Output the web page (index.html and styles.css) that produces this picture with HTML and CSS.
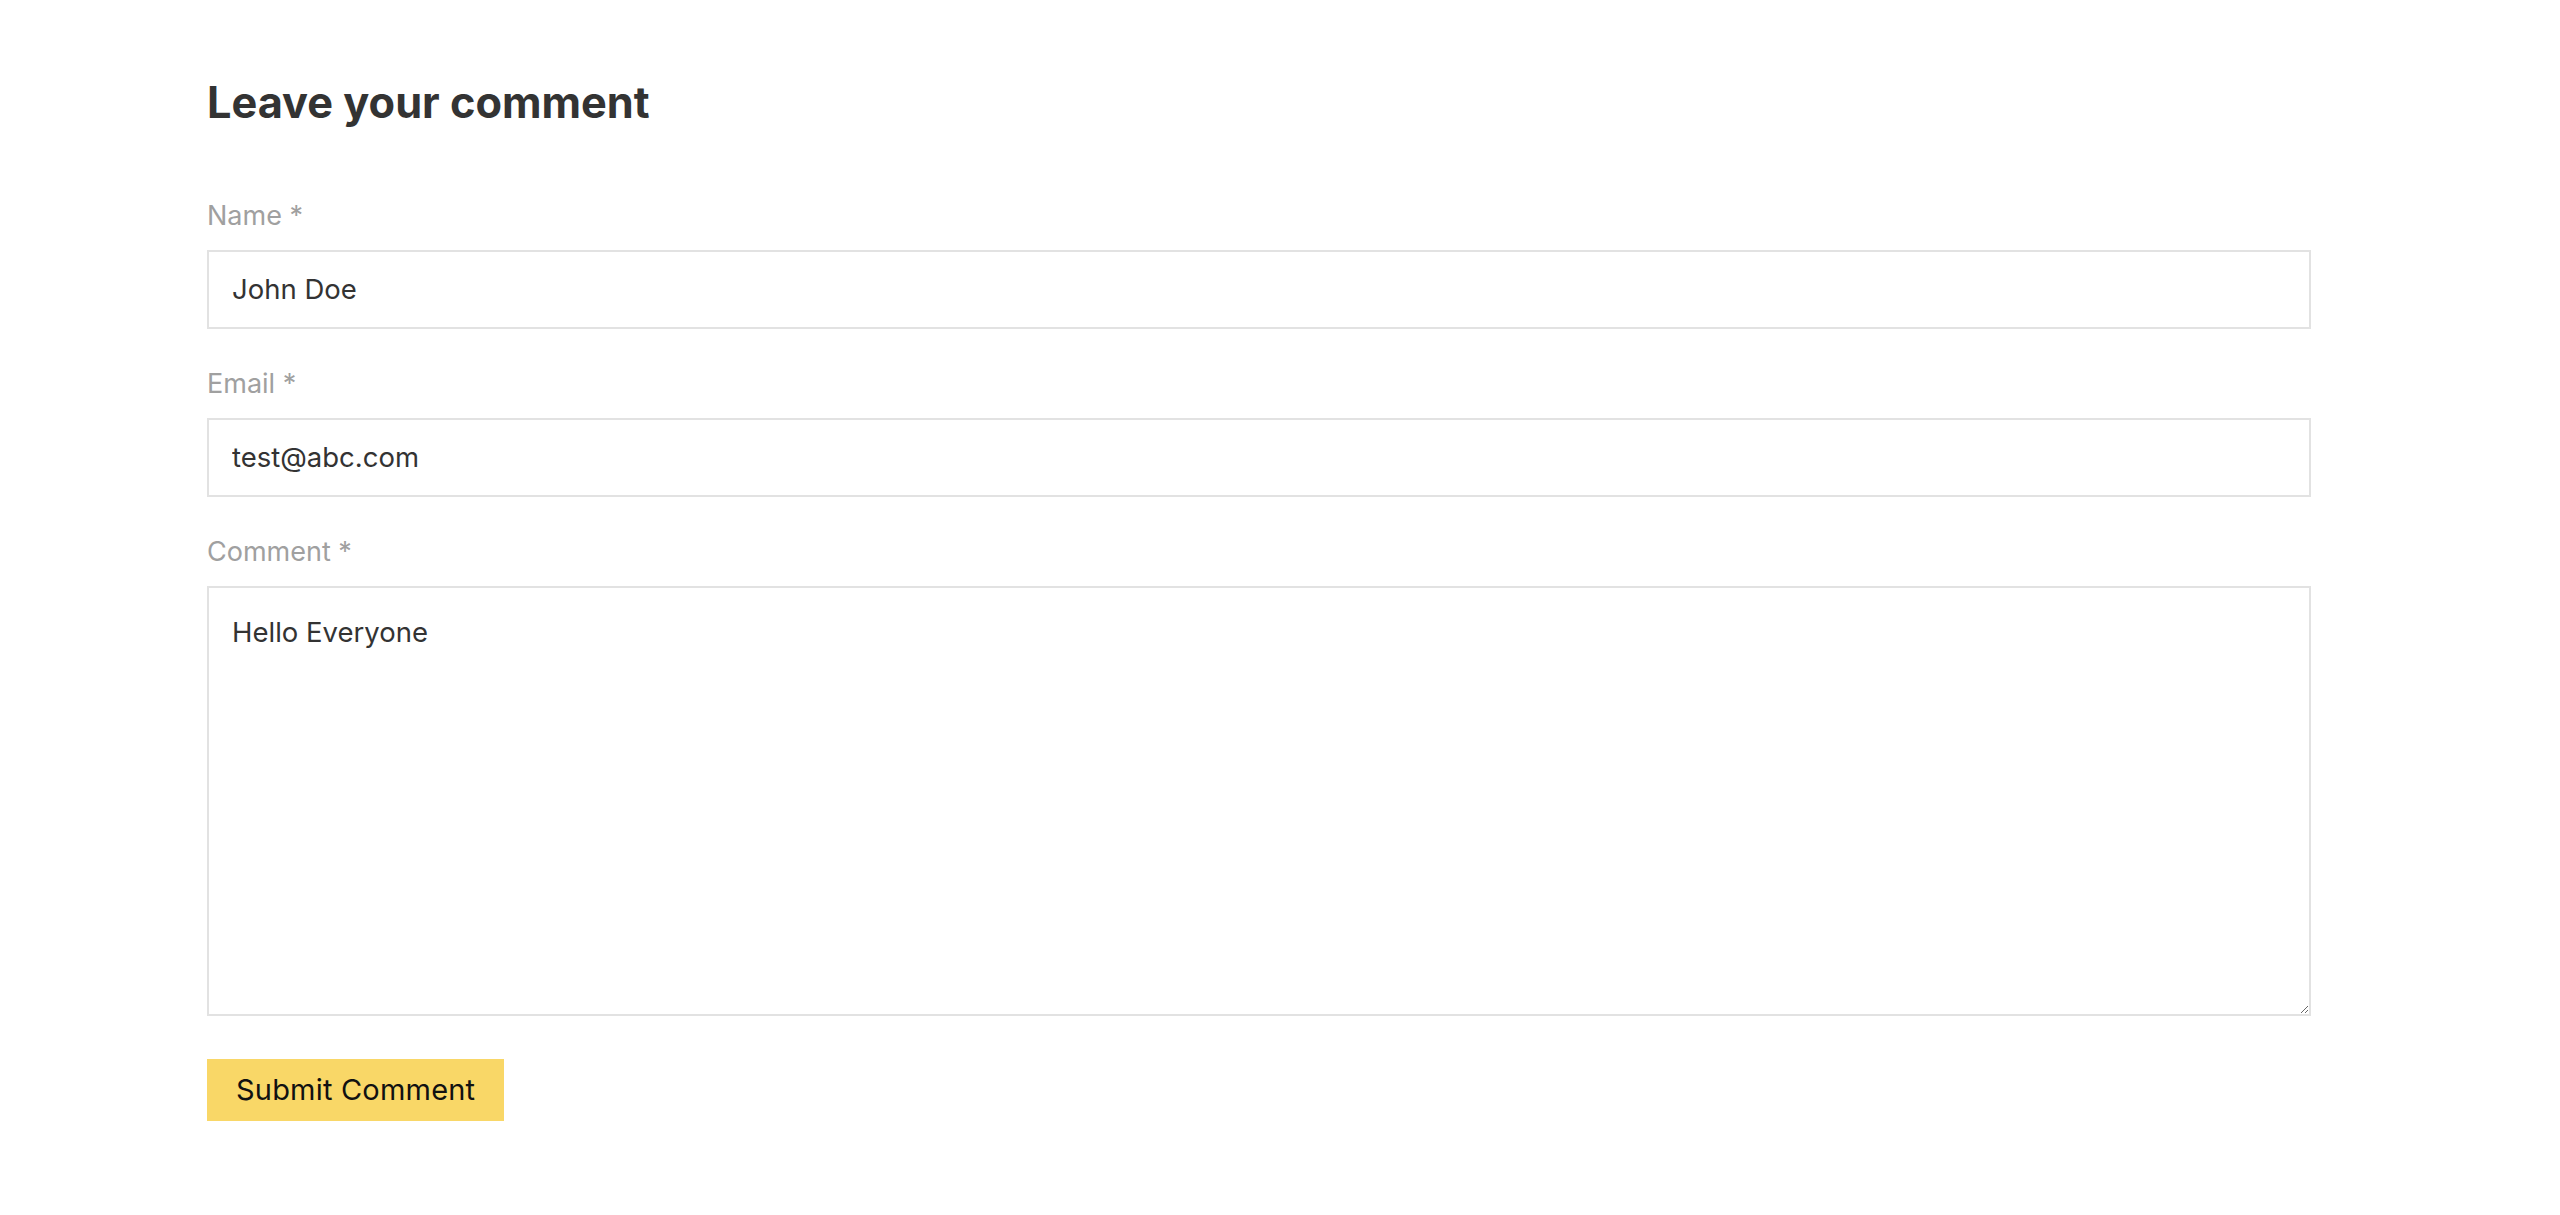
FILE: index.html
```html
<!DOCTYPE html>
<html lang="en">
<head>
<meta charset="utf-8">
<title>Leave your comment</title>
<link rel="stylesheet" href="styles.css">
</head>
<body>
<form class="comment-form">
  <h2 class="comment-title">Leave your comment</h2>
  <div class="field">
    <label class="field-label" for="name">Name *</label>
    <input class="field-input" id="name" type="text" value="John Doe">
  </div>
  <div class="field">
    <label class="field-label" for="email">Email *</label>
    <input class="field-input" id="email" type="email" value="test@abc.com">
  </div>
  <div class="field">
    <label class="field-label" for="comment">Comment *</label>
    <textarea class="field-input field-textarea" id="comment">Hello Everyone</textarea>
  </div>
  <button class="submit-btn" type="button">Submit Comment</button>
</form>
</body>
</html>
```
FILE: styles.css
```css
* { box-sizing: border-box; }
html, body {
  margin: 0;
  padding: 0;
  background: #ffffff;
}
body {
  font-family: Inter, "Noto Sans", sans-serif;
  color: #333333;
}
.comment-form {
  display: flex;
  flex-direction: column;
  align-items: flex-start;
  width: 2104px;
  margin-left: 207px;
  padding-top: 77px;
}
.comment-title {
  margin: 0 0 67px 0;
  font-size: 43.3px;
  line-height: 1.2;
  font-weight: 700;
  color: #333333;
}
.field {
  display: flex;
  flex-direction: column;
  width: 100%;
  margin-bottom: 35px;
}
.field-label {
  font-size: 27px;
  line-height: 39px;
  color: #a0a0a0;
  margin-bottom: 15px;
}
.field-input {
  width: 100%;
  height: 79px;
  border: 2px solid #e2e2e2;
  border-radius: 0;
  padding: 0 23px;
  font-family: Inter, "Noto Sans", sans-serif;
  font-size: 27.5px;
  color: #333333;
  background: #ffffff;
  outline: none;
}
.field-textarea {
  height: 430px;
  padding: 24px 23px;
  line-height: 1.5;
  resize: vertical;
  display: block;
}
.submit-btn {
  margin-top: 8px;
  height: 62px;
  padding: 0 29px;
  border: none;
  border-radius: 0;
  background: #f9d767;
  color: #111111;
  font-family: Inter, "Noto Sans", sans-serif;
  font-size: 29px;
  letter-spacing: 0.2px;
  cursor: pointer;
}
```
